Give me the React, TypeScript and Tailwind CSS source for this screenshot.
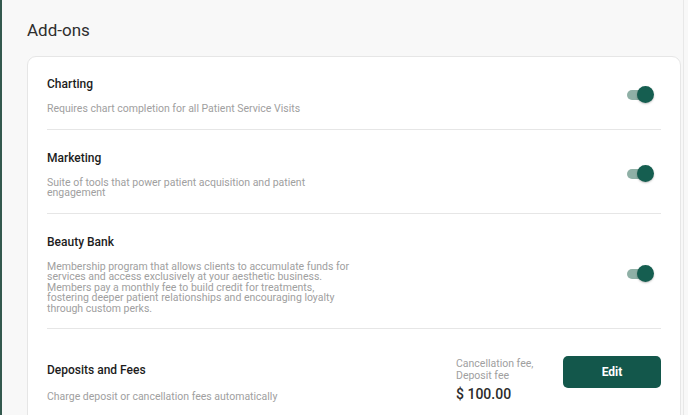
import React from "react";

function Toggle() {
  return (
    <div className="relative w-[30px] h-[18px] mr-[7px] shrink-0">
      <div className="absolute left-[3px] right-[3px] top-[4px] h-[10px] rounded-full bg-[#8fb0a6]" />
      <div className="absolute right-0 top-0 w-[17px] h-[17px] rounded-full bg-[#155e50] shadow-[0_1px_2px_rgba(0,0,0,0.25)]" />
    </div>
  );
}

function Row({ title, desc, first }: { title: string; desc: string; first?: boolean }) {
  return (
    <div className={`flex items-center justify-between border-b border-[#e6e6e6] ${first ? "pt-[19px]" : "pt-[20px]"} pb-[14px]`}>
      <div className="max-w-[306px]">
        <div className="text-[12px] leading-[16px] font-medium text-[#1c1c1c]">{title}</div>
        <div className="mt-[12px] text-[10.5px] leading-[10.5px] text-[#a0a0a0]">{desc}</div>
      </div>
      <Toggle />
    </div>
  );
}

export default function App() {
  return (
    <div
      className="w-[688px] h-[415px] overflow-hidden bg-[#f8f8f8] border-l-[2px] border-[#33594e] relative"
      style={{ fontFamily: "Roboto, 'Liberation Sans', sans-serif" }}
    >
      <div className="pl-[25px] pt-[20px]">
        <h1 className="text-[17px] leading-[20px] text-[#2e2e2e]">Add-ons</h1>
        <div className="mt-[16px] w-[654px] bg-white border border-[#e6e6e6] rounded-[9px] px-[19px]">
          <Row first title="Charting" desc="Requires chart completion for all Patient Service Visits" />
          <Row title="Marketing" desc="Suite of tools that power patient acquisition and patient engagement" />
          <Row
            title="Beauty Bank"
            desc="Membership program that allows clients to accumulate funds for services and access exclusively at your aesthetic business. Members pay a monthly fee to build credit for treatments, fostering deeper patient relationships and encouraging loyalty through custom perks."
          />
          <div className="flex items-start justify-between pt-[27px] pb-[20px]">
            <div className="pt-[6px]">
              <div className="text-[12px] leading-[16px] font-medium text-[#1c1c1c]">Deposits and Fees</div>
              <div className="mt-[13px] text-[10.5px] leading-[12px] text-[#a0a0a0]">
                Charge deposit or cancellation fees automatically
              </div>
            </div>
            <div className="flex items-start">
              <div className="pt-[2px] w-[107px]">
                <div className="text-[10.5px] leading-[11.5px] text-[#a0a0a0]">
                  <div>Cancellation fee,</div>
                  <div>Deposit fee</div>
                </div>
                <div className="mt-[5px] text-[14px] leading-[16px] font-medium text-[#2b2b2b]">$ 100.00</div>
              </div>
              <button className="w-[98px] h-[32px] rounded-[5px] bg-[#13574b] text-white text-[12px] font-bold">
                Edit
              </button>
            </div>
          </div>
        </div>
      </div>
      <div className="absolute right-[4px] top-0 h-full w-px bg-[#e8e8e8]" />
    </div>
  );
}
